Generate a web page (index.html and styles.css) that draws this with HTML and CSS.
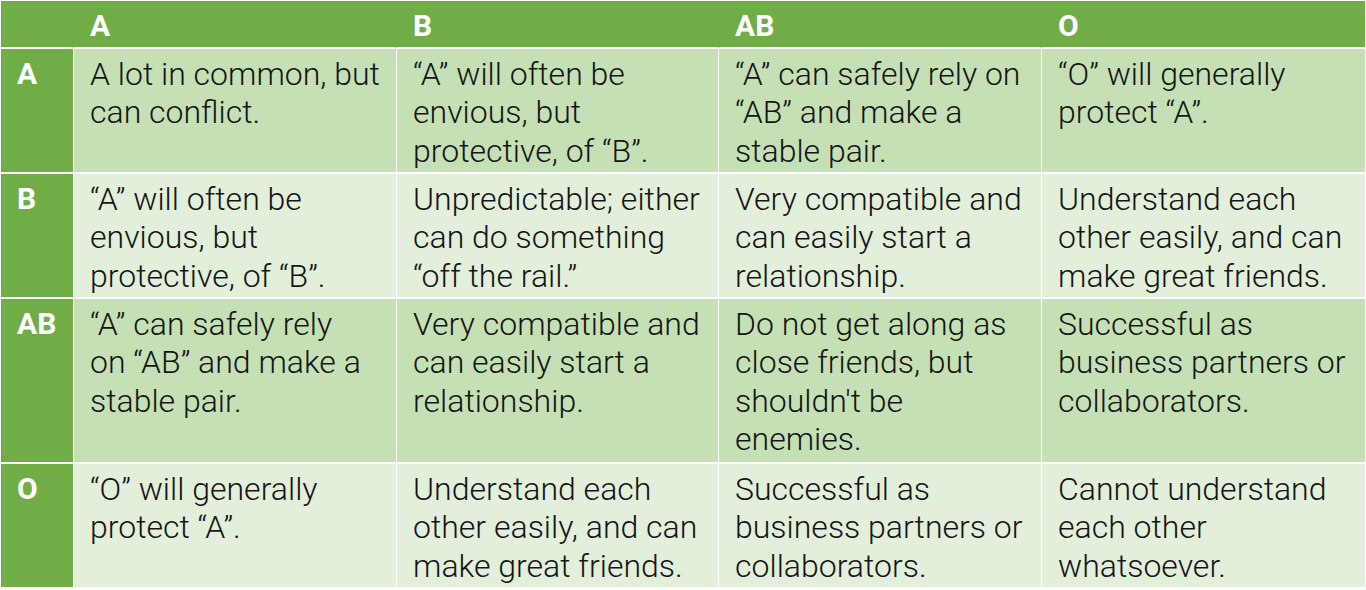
FILE: index.html
```html
<!DOCTYPE html>
<html lang="en">
<head>
<meta charset="utf-8">
<title>Blood type compatibility</title>
<link rel="stylesheet" href="styles.css">
</head>
<body>
<table class="grid">
  <colgroup>
    <col class="c0"><col class="c1"><col class="c2"><col class="c3"><col class="c4">
  </colgroup>
  <thead>
    <tr class="head">
      <th></th><th>A</th><th>B</th><th>AB</th><th>O</th>
    </tr>
  </thead>
  <tbody>
    <tr class="row dark short">
      <th class="label">A</th>
      <td>A lot in common, but<br>can conflict.</td>
      <td>“A” will often be<br>envious, but<br>protective, of “B”.</td>
      <td>“A” can safely rely on<br>“AB” and make a<br>stable pair.</td>
      <td>“O” will generally<br>protect “A”.</td>
    </tr>
    <tr class="row light short">
      <th class="label">B</th>
      <td>“A” will often be<br>envious, but<br>protective, of “B”.</td>
      <td>Unpredictable; either<br>can do something<br>“off the rail.”</td>
      <td>Very compatible and<br>can easily start a<br>relationship.</td>
      <td>Understand each<br>other easily, and can<br>make great friends.</td>
    </tr>
    <tr class="row dark tall">
      <th class="label">AB</th>
      <td>“A” can safely rely<br>on “AB” and make a<br>stable pair.</td>
      <td>Very compatible and<br>can easily start a<br>relationship.</td>
      <td>Do not get along as<br>close friends, but<br>shouldn't be<br>enemies.</td>
      <td>Successful as<br>business partners or<br>collaborators.</td>
    </tr>
    <tr class="row light short">
      <th class="label">O</th>
      <td>“O” will generally<br>protect “A”.</td>
      <td>Understand each<br>other easily, and can<br>make great friends.</td>
      <td>Successful as<br>business partners or<br>collaborators.</td>
      <td>Cannot understand<br>each other<br>whatsoever.</td>
    </tr>
  </tbody>
</table>
</body>
</html>
```
FILE: styles.css
```css
html, body {
  margin: 0;
  padding: 0;
  background: #ffffff;
}

body {
  padding: 1px 0 0 1px;
  font-family: Roboto, "Liberation Sans", sans-serif;
  color: #151515;
}

.grid {
  border-collapse: separate;
  border-spacing: 0;
  table-layout: fixed;
  width: 1364px;
  font-size: 32px;
  font-weight: 300;
  line-height: 38.5px;
}

.c0 { width: 72px; }
.c1 { width: 323px; }
.c2 { width: 322px; }
.c3 { width: 323px; }
.c4 { width: 324px; }

.grid th,
.grid td {
  padding: 5.5px 0 0 16px;
  text-align: left;
  vertical-align: top;
  white-space: nowrap;
  border-bottom: 2px solid #ffffff;
  border-left: 1px solid #ffffff;
}

.grid th:first-child {
  border-left: 0;
}

.head th {
  background: #70ad47;
  color: #ffffff;
  font-size: 30px;
  font-weight: 700;
  height: 40px;
  padding-top: 6px;
  border-left-color: transparent;
}

.row .label {
  background: #70ad47;
  color: #ffffff;
  font-size: 30px;
  font-weight: 700;
  padding-top: 6px;
}

.row.dark td { background: #c5e0b4; }
.row.light td { background: #e2efda; }

.short th, .short td { height: 117px; }
.tall th, .tall td { height: 157px; }
```
